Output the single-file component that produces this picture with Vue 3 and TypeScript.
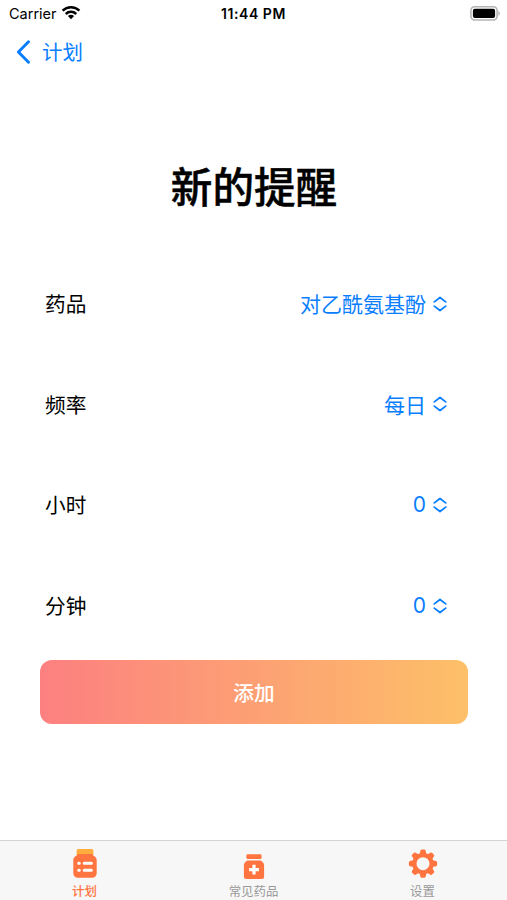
<script setup lang="ts">
import { ref } from 'vue'

interface Field {
  label: string
  value: string
}

interface Tab {
  id: 'plan' | 'common' | 'settings'
  label: string
}

const fields = ref<Field[]>([
  { label: '药品', value: '对乙酰氨基酚' },
  { label: '频率', value: '每日' },
  { label: '小时', value: '0' },
  { label: '分钟', value: '0' },
])

const tabs: Tab[] = [
  { id: 'plan', label: '计划' },
  { id: 'common', label: '常见药品' },
  { id: 'settings', label: '设置' },
]

const activeTab = ref<Tab['id']>('plan')
const teeth: number[] = [0, 45, 90, 135, 180, 225, 270, 315]
</script>

<template>
  <div class="screen">
    <header class="status">
      <div class="carrier">
        <span>Carrier</span>
        <svg class="wifi" width="20" height="15" viewBox="0 0 20 15">
          <g fill="none" stroke="#000" stroke-width="2.5">
            <path d="M1.6 5.7a12 12 0 0 1 16.8 0" />
            <path d="M4.8 9a7.4 7.4 0 0 1 10.4 0" />
          </g>
          <path d="M6.9 11.1a4.5 4.5 0 0 1 6.2 0L10 14.2z" />
        </svg>
      </div>
      <div class="clock">11:44 PM</div>
      <svg class="battery" width="31" height="15" viewBox="0 0 31 15">
        <rect x="0.9" y="0.8" width="26.2" height="13.2" rx="3.8" fill="#fff" stroke="#b4b4b4" stroke-width="1.6" />
        <rect x="2.9" y="2.8" width="22.2" height="9.2" rx="2" />
        <path d="M28.4 5v4.8c2-.8 2-4 0-4.8z" fill="#b4b4b4" />
      </svg>
    </header>

    <nav class="nav">
      <button class="back" type="button">
        <svg width="15" height="24" viewBox="0 0 15 24">
          <path d="M12.5 1.8 2.4 12l10.1 10.2" fill="none" stroke="currentColor" stroke-width="2.9" stroke-linecap="round" stroke-linejoin="round" />
        </svg>
        <span>计划</span>
      </button>
    </nav>

    <main class="content">
      <h1 class="title">新的提醒</h1>
      <div class="form">
        <div v-for="field in fields" :key="field.label" class="row">
          <span class="label">{{ field.label }}</span>
          <button class="picker" type="button">
            <span>{{ field.value }}</span>
            <svg width="14" height="16" viewBox="0 0 14 16">
              <path d="M1.3 5.900 7 1.500l5.700 4.400M1.300 10.100 7 14.500l5.700-4.400" fill="none" stroke="currentColor" stroke-width="1.800" stroke-linecap="round" stroke-linejoin="round" />
            </svg>
          </button>
        </div>
      </div>
      <button class="submit" type="button">添加</button>
    </main>

    <footer class="tabs">
      <button
        v-for="tab in tabs"
        :key="tab.id"
        class="tab"
        :class="{ active: tab.id === activeTab }"
        type="button"
        @click="activeTab = tab.id"
      >
        <svg v-if="tab.id === 'plan'" width="32" height="32" viewBox="0 0 32 32">
          <rect x="7.6" y="1" width="16.8" height="7" rx="1.8" fill="#ffac3e" />
          <path d="M9 6h14c.3 1.500 4.700 2.500 4.700 6v13.200a4.600 4.600 0 0 1-4.600 4.600H8.900a4.600 4.600 0 0 1-4.600-4.600V12C4.300 8.500 8.700 7.500 9 6z" fill="#ff743f" />
          <g stroke="#fff" stroke-width="3" stroke-linecap="round">
            <path d="M9.700 15.200h.6M15.200 15.200h7.200M9.700 22.200h.6M15.200 22.200h7.200" />
          </g>
        </svg>
        <svg v-else-if="tab.id === 'common'" width="32" height="32" viewBox="0 0 32 32">
          <rect x="8.400" y="6.300" width="15.200" height="4.800" rx="1.400" fill="#ff743f" />
          <path d="M9 12.500h14c.6 1.200 3.100 1.800 3.100 4.700v11.200a2.500 2.500 0 0 1-2.500 2.500H8.400a2.500 2.500 0 0 1-2.500-2.500V17.200c0-2.900 2.500-3.500 3.100-4.700z" fill="#ff743f" />
          <path d="M16 16.700v9.800M11.100 21.600h9.800" stroke="#fff" stroke-width="3.200" />
        </svg>
        <svg v-else width="32" height="32" viewBox="0 0 32 32" fill="#ff743f">
          <path
            v-for="angle in teeth"
            :key="angle"
            d="M12.400 7 13.400 2.700q.3-1.100 1.300-1.100h2.600q1 0 1.300 1.100L19.600 7z"
            :transform="`rotate(${angle} 16 15.700)`"
          />
          <circle cx="16" cy="15.700" r="8.600" fill="none" stroke="#ff743f" stroke-width="4.200" />
        </svg>
        <span>{{ tab.label }}</span>
      </button>
    </footer>
  </div>
</template>

<style>
body {
  margin: 0;
  background: #fff;
}
</style>

<style scoped>
.screen {
  display: flex;
  flex-direction: column;
  width: 507px;
  height: 900px;
  overflow: hidden;
  background: #fff;
  color: #000;
  font-family: Inter, "Noto Sans CJK SC", sans-serif;
}

button {
  margin: 0;
  padding: 0;
  border: 0;
  background: none;
  font: inherit;
}

svg {
  display: block;
  flex: none;
}

.status {
  display: grid;
  grid-template-columns: 1fr auto 1fr;
  align-items: center;
  box-sizing: border-box;
  height: 27px;
  padding: 0 6px;
  font-size: 14.500px;
}

.carrier {
  display: flex;
  align-items: center;
  gap: 4px;
  padding-left: 3px;
}

.wifi {
  margin-top: -3px;
}

.clock {
  font-size: 14px;
  font-weight: 600;
  letter-spacing: 0.550px;
}

.battery {
  justify-self: end;
}

.nav {
  display: flex;
  align-items: center;
  height: 50px;
  padding-left: 16px;
}

.back {
  display: flex;
  align-items: center;
  gap: 11px;
  color: #087eff;
  font-size: 20.500px;
  line-height: 30px;
}

.back span {
  padding-top: 2px;
}

.content {
  flex: 1;
  padding: 81px 39px 0 40px;
}

.title {
  margin: 0;
  font-size: 41.600px;
  font-weight: 500;
  line-height: 60px;
  text-align: center;
  -webkit-text-stroke: 0.500px #000;
}

.form {
  padding: 35px 21px 0 5px;
}

.row {
  display: flex;
  align-items: center;
  justify-content: space-between;
  height: 100.600px;
  font-size: 20.700px;
}

.picker {
  display: flex;
  align-items: center;
  gap: 7px;
  color: #087eff;
  font-size: 21px;
}

.picker svg {
  margin-top: 1px;
}

.submit {
  display: block;
  width: 100%;
  height: 64px;
  margin-top: 5px;
  border-radius: 12px;
  background: linear-gradient(90deg, #fc8080, #fdc068);
  color: #fff;
  font-size: 20.700px;
  font-weight: 500;
}

.tabs {
  display: grid;
  grid-template-columns: repeat(3, 1fr);
  box-sizing: border-box;
  height: 60px;
  border-top: 1px solid #d4d4d4;
  background: #f7f7f7;
}

.tab {
  display: flex;
  flex-direction: column;
  align-items: center;
  padding-top: 7px;
  color: #999;
  font-size: 12.400px;
  line-height: 24px;
}

.tab.active {
  color: #ff743f;
  font-weight: 500;
}
</style>
